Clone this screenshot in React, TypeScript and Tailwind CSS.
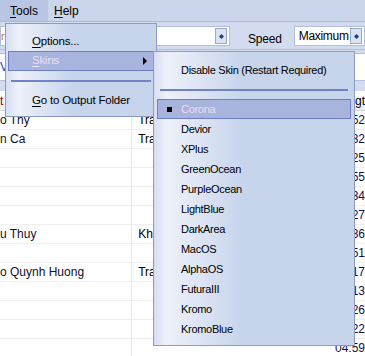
const rows = [
  { name: "o Thy", artist: "Tra", time: "04:52" },
  { name: "n Ca", artist: "Tra", time: "03:32" },
  { name: "", artist: "", time: "04:25" },
  { name: "", artist: "", time: "03:55" },
  { name: "", artist: "", time: "04:34" },
  { name: "", artist: "", time: "05:27" },
  { name: "u Thuy", artist: "Kh", time: "04:36" },
  { name: "", artist: "", time: "03:51" },
  { name: "o Quynh Huong", artist: "Tra", time: "04:17" },
  { name: "", artist: "", time: "05:13" },
  { name: "", artist: "", time: "04:26" },
  { name: "", artist: "", time: "03:22" },
  { name: "", artist: "", time: "04:59" },
];

const skins = [
  "Devior",
  "XPlus",
  "GreenOcean",
  "PurpleOcean",
  "LightBlue",
  "DarkArea",
  "MacOS",
  "AlphaOS",
  "FuturaIII",
  "Kromo",
  "KromoBlue",
];

function SpinButton() {
  return (
    <div className="flex h-[16px] w-[12px] items-center justify-center border border-[#98a8cc] bg-[#dbe3f3]">
      <svg width="5" height="5" viewBox="0 0 5 5">
        <path d="M2.5 0 L5 2.5 L2.5 5 L0 2.5 Z" fill="#1f3f80" />
      </svg>
    </div>
  );
}

function Hot({ k, rest }: { k: string; rest: string }) {
  return (
    <span>
      <span className="underline underline-offset-2">{k}</span>
      {rest}
    </span>
  );
}

export default function App() {
  return (
    <div
      className="relative h-[356px] w-[365px] overflow-hidden bg-[#d3dcef] text-[11px] text-black"
      style={{ fontFamily: '"Liberation Sans", Arial, sans-serif' }}
    >
      {/* menu bar */}
      <div className="flex h-[22px] items-stretch border-b border-[#aab7d6] bg-[#cbd6ed] text-[12px]">
        <div className="flex w-[48px] items-center bg-[#b8c6e3] pl-[10px]">
          <Hot k="T" rest="ools" />
        </div>
        <div className="flex items-center pl-[6px]">
          <Hot k="H" rest="elp" />
        </div>
      </div>

      {/* toolbar */}
      <div className="flex h-[27px] items-start pt-[4px]">
        <div className="flex h-[20px] w-[230px] items-center justify-between border border-[#b3c0dc] bg-white pr-[2px]">
          <span className="text-[#d07a10]">r</span>
          <SpinButton />
        </div>
        <span className="ml-[18px] mt-[4px] text-[12px] tracking-[-0.2px]">Speed</span>
        <div className="ml-[12px] flex h-[20px] flex-1 items-center justify-between border border-[#b3c0dc] bg-white pl-[4px] pr-[2px] text-[12px] tracking-[-0.3px]">
          <span>Maximum</span>
          <SpinButton />
        </div>
      </div>

      <div className="h-[42px] border-t border-[#b3c0dc] pt-[3px]">
        <div className="flex h-[28px] items-center border-y border-[#b3c0dc] bg-white text-[12px] text-[#1e44c8]">
          V
        </div>
      </div>

      {/* list */}
      <div className="bg-white">
        <div className="flex h-[20px] items-center border-b border-[#d5d5d5] bg-linear-to-b from-white to-[#ececec] text-[12px]">
          <div className="w-[133px] shrink-0 text-[#8a1010]">t</div>
          <div className="w-[202px] shrink-0"></div>
          <div className="whitespace-nowrap">Length</div>
        </div>
        {rows.map((r, i) => (
          <div key={i} className="flex h-[19px] items-center border-b border-[#efefef] text-[12px]">
            <div className="h-full w-[133px] border-r border-[#e6e6e6] leading-[19px] text-[#101030]">{r.name}</div>
            <div className="w-[204px] pl-[6px]">{r.artist}</div>
            <div className="text-[#101040]">{r.time}</div>
          </div>
        ))}
      </div>

      {/* Tools dropdown */}
      <div className="absolute left-[5px] top-[23px] flex h-[94px] w-[152px] flex-col border border-[#8c9bc6] bg-linear-to-r from-[#d6def2] from-0% via-[#eef1fa] via-[8%] to-[#c6d4ec] to-[45%] px-[2px] pt-[8px] text-[11.5px] tracking-[-0.2px]">
        <div className="flex h-[19px] items-center pl-[24px]">
          <Hot k="O" rest="ptions..." />
        </div>
        <div className="flex h-[20px] items-center justify-between border border-[#6d7ec5] bg-[#a8b3de] pl-[23px] pr-[6px] text-[#e9e0f2]">
          <Hot k="S" rest="kins" />
          <svg width="4" height="8" viewBox="0 0 4 8">
            <path d="M0 0 L4 4 L0 8 Z" fill="#000" />
          </svg>
        </div>
        <div className="flex h-[20px] items-center px-[3px]">
          <div className="h-[2px] w-full bg-[#7282c8]" />
        </div>
        <div className="flex h-[19px] items-center pl-[24px]">
          <Hot k="G" rest="o to Output Folder" />
        </div>
      </div>

      {/* Skins submenu */}
      <div className="absolute left-[153px] top-[51px] flex h-[295px] w-[202px] flex-col border border-[#8c9bc6] bg-linear-to-r from-[#d6def2] from-0% via-[#eef1fa] via-[6%] to-[#c6d4ec] to-[45%] px-[3px] pt-[8px] text-[11px] tracking-[-0.3px]">
        <div className="flex h-[20px] items-center pl-[24px]">Disable Skin (Restart Required)</div>
        <div className="flex h-[19px] items-center px-[3px]">
          <div className="h-[2px] w-full bg-[#7282c8]" />
        </div>
        <div className="flex h-[20px] items-center border border-[#6d7ec5] bg-[#a8b3de] pl-[9px] text-[#eadff2]">
          <div className="mr-[9px] h-[5px] w-[5px] bg-black" />
          Corona
        </div>
        {skins.map((s) => (
          <div key={s} className="flex h-[20px] items-center pl-[24px]">
            {s}
          </div>
        ))}
      </div>
    </div>
  );
}
